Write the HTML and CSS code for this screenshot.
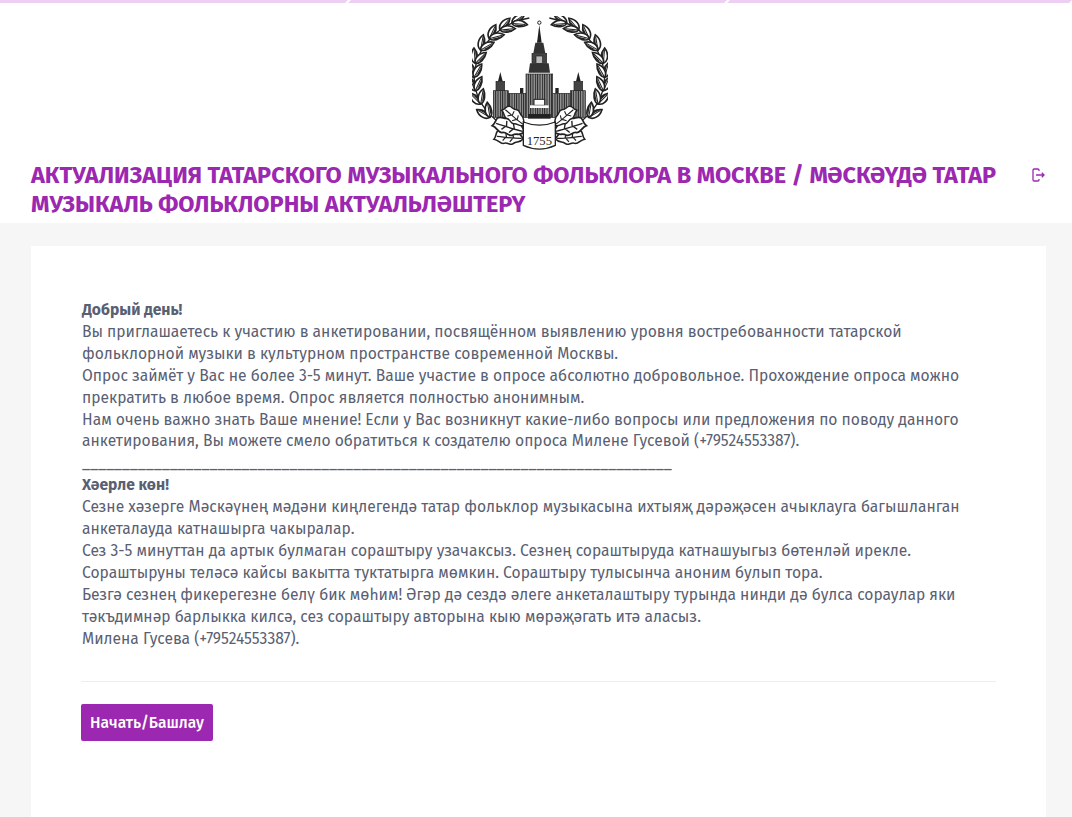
FILE: index.html
```html
<!DOCTYPE html>
<html lang="ru">
<head>
  <meta charset="UTF-8" />
  <title>Опрос</title>
  <link rel="stylesheet" href="styles.css">
</head>
<body>
  <div class="progress">
    <div class="progress-step step-a"></div>
    <div class="progress-step step-b"></div>
    <div class="progress-step step-c"></div>
  </div>
  <header class="header">
    <svg class="logo" viewBox="96 48 408 408" width="136" height="136">
      <defs>
        <pattern id="stripes" width="7" height="7" patternUnits="userSpaceOnUse">
          <rect width="7" height="7" fill="#222"/>
          <rect x="1" width="3" height="7" fill="#bbb"/>
        </pattern>
        <g id="leaf">
          <path d="M0 0C8-14 30-15 46 0 30 11 8 11 0 0Z" fill="#fff" stroke="#222" stroke-width="5"/>
          <path d="M2 0H40" stroke="#222" stroke-width="3"/>
          <path d="M8 2C16 9 28 8 38 2 26 3 16 3 8 2Z" fill="#222"/>
        </g>
        <g id="oak">
          <path d="M0 0C8-14 16-8 22-16 28-24 38-14 46-20 54-24 60-14 72-14 66-4 72 2 66 8 58 14 52 8 44 16 36 22 30 12 22 14 14 14 8 8 0 0Z" fill="#fff" stroke="#222" stroke-width="4"/>
          <path d="M4 0C24-4 44-4 66-6M26-3 32-14M44-4 50-14M24-2 30 8M42-4 46 8" fill="none" stroke="#222" stroke-width="3"/>
        </g>
        <g id="half">
          <path d="M268 54C180 70 118 130 104 210 96 270 120 320 170 362" fill="none" stroke="#222" stroke-width="4"/>
          <use href="#leaf" transform="translate(150 352) rotate(-150)"/>
          <use href="#leaf" transform="translate(150 352) rotate(-100)"/>
          <use href="#leaf" transform="translate(122 312) rotate(-135)"/>
          <use href="#leaf" transform="translate(122 312) rotate(-80)"/>
          <use href="#leaf" transform="translate(106 272) rotate(-115)"/>
          <use href="#leaf" transform="translate(106 272) rotate(-65)"/>
          <use href="#leaf" transform="translate(102 232) rotate(-105)"/>
          <use href="#leaf" transform="translate(102 232) rotate(-60)"/>
          <use href="#leaf" transform="translate(106 190) rotate(-95)"/>
          <use href="#leaf" transform="translate(106 190) rotate(-45)"/>
          <use href="#leaf" transform="translate(122 150) rotate(-80)"/>
          <use href="#leaf" transform="translate(122 150) rotate(-30)"/>
          <use href="#leaf" transform="translate(148 116) rotate(-65)"/>
          <use href="#leaf" transform="translate(148 116) rotate(-15)"/>
          <use href="#leaf" transform="translate(180 90) rotate(-50)"/>
          <use href="#leaf" transform="translate(180 90) rotate(-5)"/>
          <use href="#leaf" transform="translate(216 70) rotate(-35)"/>
          <use href="#leaf" transform="translate(216 70) rotate(5)"/>
          <!-- side of the building -->
          <rect x="205" y="280" width="53" height="72" fill="url(#stripes)" stroke="#222" stroke-width="2"/>
          <rect x="160" y="272" width="45" height="80" fill="url(#stripes)" stroke="#222" stroke-width="2"/>
          <rect x="168" y="244" width="26" height="28" fill="#444" stroke="#222" stroke-width="2"/>
          <path d="M181 216 174 244H188Z" fill="#222"/>
          <rect x="240" y="264" width="10" height="16" fill="#222"/>
          <!-- oak leaves at the foot -->
          <use href="#oak" transform="translate(250 416) rotate(-170) scale(1.2)"/>
          <use href="#oak" transform="translate(254 396) rotate(-158) scale(1.35)"/>
          <use href="#oak" transform="translate(252 376) rotate(-135) scale(1.1)"/>
        </g>
      </defs>

      <use href="#half"/>
      <use href="#half" transform="translate(596) scale(-1 1)"/>

      <!-- main tower -->
      <circle cx="298" cy="68" r="5" fill="#fff" stroke="#222" stroke-width="3"/>
      <path d="M298 74 291 128H305Z" fill="#222"/>
      <path d="M286 128H310L316 160H280Z" fill="#333"/>
      <rect x="276" y="160" width="44" height="30" fill="#444" stroke="#222" stroke-width="2"/>
      <rect x="288" y="168" width="20" height="22" fill="#bbb" stroke="#222" stroke-width="2"/>
      <path d="M266 218 270 190H326L330 218Z" fill="#333"/>
      <rect x="258" y="222" width="80" height="130" fill="url(#stripes)" stroke="#222" stroke-width="2"/>
      <rect x="282" y="298" width="32" height="18" fill="#fff" stroke="#222" stroke-width="3"/>
      <rect x="270" y="316" width="56" height="8" fill="#fff"/>
      <rect x="264" y="342" width="68" height="14" fill="#222"/>

      <!-- ribbon with the year -->
      <path d="M250 366C280 378 316 378 346 366V436C316 450 280 450 250 436Z" fill="#fff" stroke="#222" stroke-width="4"/>
      <text class="logo-year" x="298" y="436" text-anchor="middle">1755</text>
    </svg>
    <div class="title-row">
      <h1 class="title">АКТУАЛИЗАЦИЯ ТАТАРСКОГО МУЗЫКАЛЬНОГО ФОЛЬКЛОРА В МОСКВЕ / МӘСКӘҮДӘ ТАТАР МУЗЫКАЛЬ ФОЛЬКЛОРНЫ АКТУАЛЬЛӘШТЕРҮ</h1>
      <svg class="exit" viewBox="0 0 13 14" width="13" height="14" fill="none" stroke="#9c27b0" stroke-width="1.3">
        <path d="M7 3V2.2A1.2 1.2 0 0 0 5.8 1H2.2A1.2 1.2 0 0 0 1 2.2v9.6A1.2 1.2 0 0 0 2.2 13h3.6A1.2 1.2 0 0 0 7 11.8V11M4 7h8M9.8 4.8 12 7 9.8 9.2"/>
      </svg>
    </div>
  </header>
  <main class="page">
    <section class="card">
      <div class="intro">
        <b>Добрый день!</b><br>
        Вы приглашаетесь к участию в анкетировании, посвящённом выявлению уровня востребованности татарской фольклорной музыки в культурном пространстве современной Москвы.<br>
        Опрос займёт у Вас не более 3-5 минут. Ваше участие в опросе абсолютно добровольное. Прохождение опроса можно прекратить в любое время. Опрос является полностью анонимным.<br>
        Нам очень важно знать Ваше мнение! Если у Вас возникнут какие-либо вопросы или предложения по поводу данного анкетирования, Вы можете смело обратиться к создателю опроса Милене Гусевой (+79524553387).<br>
        __________________________________________________________________________<br>
        <b>Хәерле көн!</b><br>
        Сезне хәзерге Мәскәүнең мәдәни киңлегендә татар фольклор музыкасына ихтыяҗ дәрәҗәсен ачыклауга багышланган анкеталауда катнашырга чакыралар.<br>
        Сез 3-5 минуттан да артык булмаган сораштыру узачаксыз. Сезнең сораштыруда катнашуыгыз бөтенләй ирекле. Сораштыруны теләсә кайсы вакытта туктатырга мөмкин. Сораштыру тулысынча аноним булып тора.<br>
        Безгә сезнең фикерегезне белү бик мөһим! Әгәр дә сездә әлеге анкеталаштыру турында нинди дә булса сораулар яки тәкъдимнәр барлыкка килсә, сез сораштыру авторына кыю мөрәҗәгать итә аласыз.<br>
        Милена Гусева (+79524553387).
      </div>
      <hr class="divider">
      <button class="start-btn">Начать/Башлау</button>
    </section>
  </main>
</body>
</html>
```

FILE: styles.css
```css
* {
  box-sizing: border-box;
}

html, body {
  height: 100%;
}

body {
  margin: 0;
  background: #f6f6f6;
  font-family: "Fira Sans", "Noto Sans", sans-serif;
  color: #596072;
  overflow: hidden;
}

.progress {
  display: flex;
  height: 3px;
  background: #fff;
}

.progress-step {
  background: #eccff2;
  clip-path: polygon(3px 0, 100% 0, calc(100% - 3px) 100%, 0 100%);
}

.step-a { width: 348px; clip-path: polygon(0 0, 100% 0, calc(100% - 3px) 100%, 0 100%); }
.step-b { width: 379px; }
.step-c { flex: 1; }

.header {
  background: #fff;
  padding: 13px 26px 0 31px;
  display: flex;
  flex-direction: column;
  height: 220px;
}

.logo {
  align-self: center;
  margin-left: 2px;
}

.title-row {
  display: flex;
  align-items: flex-start;
  justify-content: space-between;
  margin-top: 9px;
}

.title {
  margin: 0;
  width: 985px;
  font-size: 23.47px;
  line-height: 29px;
  font-weight: 700;
  color: #9c27b0;
}

.exit {
  margin: 7px 1px 0 0;
}

.logo-year {
  font-family: "Liberation Serif", serif;
  font-size: 38px;
  fill: #222;
}

.page {
  padding: 23px 26px 0 31px;
}

.card {
  background: #fff;
  padding: 53px 50px 76px;
  min-height: 600px;
}

.intro {
  font-size: 15.64px;
  line-height: 21.9px;
  padding-left: 1px;
}

.intro b {
  font-weight: 700;
}

.divider {
  border: 0;
  border-top: 1px solid #eee;
  margin: 31px 0 22px;
}

.start-btn {
  display: block;
  width: 132px;
  height: 37px;
  padding: 0;
  border: 0;
  border-radius: 2px;
  background: #9c27b0;
  color: #fff;
  font: 500 15.6px "Fira Sans", "Noto Sans", sans-serif;
}
```
